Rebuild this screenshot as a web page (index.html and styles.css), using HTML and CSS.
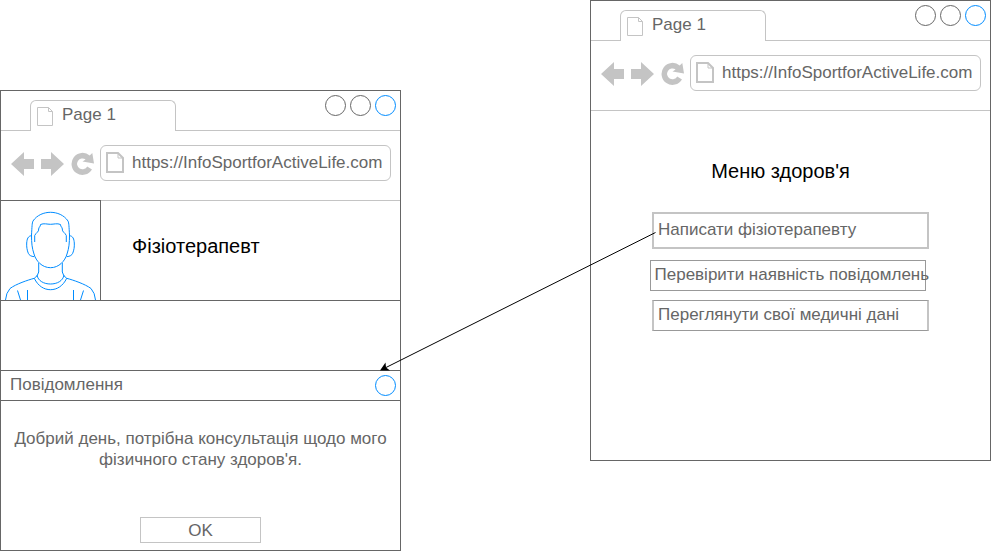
FILE: index.html
```html
<!DOCTYPE html>
<html lang="uk">
<head>
<meta charset="utf-8">
<meta name="viewport" content="width=device-width, initial-scale=1">
<title>InfoSportforActiveLife</title>
<link rel="stylesheet" href="styles.css">
</head>
<body>
<svg class="defs" width="0" height="0" aria-hidden="true">
  <symbol id="doc" viewBox="0 0 16 20"><path d="M.5 .5H11.500L15.500 4.500V18.500H.5zM11.500 .5V4.500H15.500"/></symbol>
  <symbol id="doc-bold" viewBox="0 0 18 21"><path d="M1 1H12L17 6V20H1z"/><path stroke-width="1" d="M12 1V6H17"/></symbol>
  <symbol id="back" viewBox="0 0 24 26"><path d="M0 14 13 2V9H23V19H13V26z"/></symbol>
  <symbol id="forward" viewBox="0 0 24 26"><path d="M23 14 10 2V9H0V19H10V26z"/></symbol>
  <symbol id="reload" viewBox="0 0 24 26"><path d="M18.700 5.500 21.300 3 23 13.500 11.500 11.500 14.600 9.500A5.400 5.400 0 1 0 16.200 16.500L21 19.500A11 11 0 1 1 18.700 5.500z"/></symbol>
</svg>
<main class="board">
  <section class="window chat">
    <header class="tabs">
      <div class="tab"><svg class="tab-icon" aria-hidden="true"><use href="#doc"/></svg>Page 1</div>
      <div class="controls">
        <button class="dot" aria-label="Згорнути"></button>
        <button class="dot" aria-label="Розгорнути"></button>
        <button class="dot accent" aria-label="Закрити"></button>
      </div>
    </header>
    <nav class="toolbar">
      <button class="tool" aria-label="Назад"><svg><use href="#back"/></svg></button>
      <button class="tool" aria-label="Вперед"><svg><use href="#forward"/></svg></button>
      <button class="tool" aria-label="Оновити"><svg><use href="#reload"/></svg></button>
      <label class="address"><svg class="address-icon" aria-hidden="true"><use href="#doc-bold"/></svg><input type="text" aria-label="Адреса" value="https://InfoSportforActiveLife.com"></label>
    </nav>
    <div class="profile">
      <svg class="avatar" viewBox="0 0 99 99" aria-hidden="true">
        <path d="M49.500 66.700C41 66.700 35 60 33 53C31 47 30.500 42 30.500 34C31 26 31 22 32 20C36 14 43 11.300 49.500 11.300S63 14 67 20C68 22 68 26 68.500 34C68.500 42 68 47 66 53C64 60 58 66.700 49.500 66.700z"/>
        <path d="M33.700 41V34.500C35 31.500 38 31 37.700 28C37.700 26 39.500 26 39.500 23.500C43 22 46 23.300 49.500 23.300S56 22 59.500 23.500C59.500 26 61.300 26 61.300 28C61 31 64 31.500 65.300 34.500V41"/>
        <path d="M30.500 34.700C27 35 26 38 25.700 42C25.500 46 26 49 27.300 52.300C28 54 30 55.500 33.300 55.700M68.500 34.700C72 35 73 38 73.300 42C73.500 46 73 49 71.700 52.300C71 54 69 55.500 65.700 55.700"/>
        <path d="M37.700 62V71Q37 75 33.300 77.300C27 79 15 83 9 87.500Q5 92 4.500 99M61.300 62V71Q62 75 65.700 77.300C72 79 84 83 90 87.500Q94 92 94.500 99"/>
        <path d="M33.300 77.300C37 85 43 88.700 49.500 88.700S62 85 65.700 77.300M36 74C37 80 43 83 49.500 83S62 80 63 74M16.500 89.500 19.500 99M26.500 89V99M72.500 89V99M82.500 89.500 79.500 99"/>
      </svg>
      <h1 class="title">Фізіотерапевт</h1>
    </div>
    <section class="dialog">
      <header class="dialog-head">
        <h2 class="dialog-title">Повідомлення</h2>
        <button class="dot accent" aria-label="Закрити повідомлення"></button>
      </header>
      <p class="message">Добрий день, потрібна консультація щодо мого фізичного стану здоров'я.</p>
      <button class="ok">OK</button>
    </section>
  </section>

  <section class="window">
    <header class="tabs">
      <div class="tab"><svg class="tab-icon" aria-hidden="true"><use href="#doc"/></svg>Page 1</div>
      <div class="controls">
        <button class="dot" aria-label="Згорнути"></button>
        <button class="dot" aria-label="Розгорнути"></button>
        <button class="dot accent" aria-label="Закрити"></button>
      </div>
    </header>
    <nav class="toolbar">
      <button class="tool" aria-label="Назад"><svg><use href="#back"/></svg></button>
      <button class="tool" aria-label="Вперед"><svg><use href="#forward"/></svg></button>
      <button class="tool" aria-label="Оновити"><svg><use href="#reload"/></svg></button>
      <label class="address"><svg class="address-icon" aria-hidden="true"><use href="#doc-bold"/></svg><input type="text" aria-label="Адреса" value="https://InfoSportforActiveLife.com"></label>
    </nav>
    <div class="menu">
      <h1 class="title menu-title">Меню здоров'я</h1>
      <button class="item primary">Написати фізіотерапевту</button>
      <button class="item shifted">Перевірити наявність повідомлень</button>
      <button class="item framed">Переглянути свої медичні дані</button>
    </div>
  </section>

  <svg class="link" viewBox="0 0 992 552" aria-hidden="true">
    <path class="link-line" d="M655.500 232.500 385 368"/>
    <path d="M380 370.500 385.500 362.500 386 367.500 390 370.500z"/>
  </svg>
</main>
</body>
</html>
```
FILE: styles.css
```css
* { box-sizing: border-box; }

body {
  margin: 0;
  background: #fff;
  color: #666;
  font: 17px/21px "Liberation Sans", Arial, sans-serif;
}

button, input { font: inherit; color: inherit; }
button { background: none; padding: 0; }
h1, h2, p { margin: 0; font-weight: normal; }
.defs { position: absolute; }

.board {
  position: relative;
  display: grid;
  grid-template-columns: 401fr 401fr;
  column-gap: 189px;
  align-items: start;
  padding-right: 1px;
}

.window {
  border: 1px solid #666;
  background: #fff;
}

.chat { margin-top: 90px; }

.tabs {
  display: flex;
  justify-content: space-between;
  align-items: flex-start;
  height: 40px;
  padding-left: 29px;
  border-bottom: 1px solid #c4c4c4;
}

.tab {
  display: flex;
  gap: 9px;
  width: 146px;
  height: 31px;
  margin-top: 9px;
  padding: 3px 6px;
  border: 1px solid #c4c4c4;
  border-bottom: 0;
  border-radius: 6px 6px 0 0;
  background: #fff;
}

.tab-icon {
  width: 16px;
  height: 20px;
  margin-top: 3px;
  fill: none;
  stroke: #c4c4c4;
}

.controls {
  display: flex;
  gap: 4px;
  padding: 4px 4px 0 0;
}

.dot {
  width: 21px;
  height: 21px;
  border: 1px solid #666;
  border-radius: 50%;
}

.dot.accent { border-color: #008cff; }

.toolbar {
  display: flex;
  align-items: center;
  gap: 6px;
  height: 70px;
  padding: 0 9px 6px 10px;
  border-bottom: 1px solid #c4c4c4;
}

.tool {
  width: 24px;
  height: 26px;
  border: 0;
}

.tool svg {
  display: block;
  width: 24px;
  height: 26px;
  fill: #c4c4c4;
}

.address {
  display: flex;
  flex: 1;
  align-items: center;
  gap: 8px;
  height: 36px;
  margin-left: -1px;
  padding-left: 5px;
  border: 1px solid #c4c4c4;
  border-radius: 6px;
}

.address-icon {
  flex: none;
  width: 18px;
  height: 21px;
  fill: none;
  stroke: #c4c4c4;
  stroke-width: 2px;
}

.address input {
  flex: 1;
  min-width: 0;
  padding: 0;
  border: 0;
  background: none;
}

.profile {
  display: flex;
  align-items: center;
  gap: 31px;
  height: 101px;
  margin-top: -1px;
  border-bottom: 1px solid #666;
}

.avatar {
  width: 100px;
  height: 100px;
  border-top: 1px solid #666;
  border-right: 1px solid #666;
  fill: none;
  stroke: #008cff;
}

.title {
  color: #000;
  font-size: 20px;
  line-height: 24px;
}

.profile .title { padding-bottom: 8px; }

.dialog {
  display: flex;
  flex-direction: column;
  align-items: center;
  margin-top: 69px;
  padding-bottom: 7px;
}

.dialog-head {
  display: flex;
  align-items: center;
  justify-content: space-between;
  width: 100%;
  height: 31px;
  padding: 0 4px 0 9px;
  border: 1px solid #666;
  border-width: 1px 0;
}

.dialog-title {
  padding-bottom: 2px;
  font-size: 17px;
  line-height: 21px;
}

.message {
  padding: 27px 9px 0;
  text-align: center;
}

.ok {
  width: 121px;
  height: 26px;
  margin-top: 47px;
  border: 1px solid #c4c4c4;
}

.menu {
  display: flex;
  flex-direction: column;
  align-items: center;
  padding: 48px 0 129px;
}

.menu-title {
  margin: 0 20px 29px 0;
}

.item {
  width: 277px;
  height: 31px;
  margin-top: 9px;
  padding: 0 4px 2px;
  border: 1px solid #999;
  text-align: left;
  white-space: nowrap;
}

.item.primary {
  height: 37px;
  margin: 0 0 2px;
  border: 2px solid #c4c4c4;
}

.item.shifted { width: 276px; margin-right: 6px; }

.item.framed {
  border-right: 2px solid #c4c4c4;
  border-left: 2px solid #c4c4c4;
}

.link {
  position: absolute;
  top: 0;
  left: 0;
  width: 100%;
  pointer-events: none;
}

.link-line {
  fill: none;
  stroke: #000;
}
```
